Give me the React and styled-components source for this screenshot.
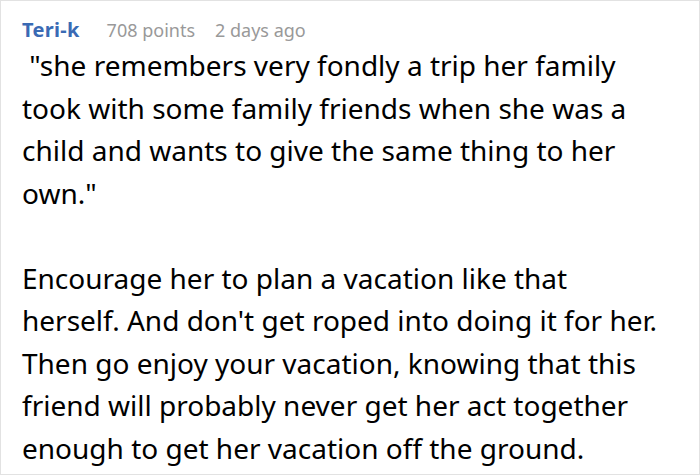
import React from "react";
import styled, { createGlobalStyle } from "styled-components";

const Global = createGlobalStyle`
  html, body { margin: 0; padding: 0; background: #fff; }
  body { font-family: "Noto Sans", "Open Sans", sans-serif; }
`;

const Card = styled.div`
  box-sizing: border-box;
  width: 700px;
  height: 475px;
  border: 1px solid #e2e2e2;
  background: #fff;
  padding: 15px 38px 0 21px;
  overflow: hidden;
`;

const Meta = styled.div`
  display: flex;
  align-items: baseline;
  gap: 20px;
  font-size: 18px;
  line-height: 28px;
`;

const Author = styled.span`
  color: #3a6ab4;
  font-size: 20px;
  font-weight: 700;
  letter-spacing: 0.3px;
  margin-right: 7px;
`;

const Info = styled.span`
  color: #999;
`;

const Body = styled.div`
  color: #000;
  font-size: 28px;
  line-height: 42.5px;
  white-space: pre-wrap;
`;

const Para = styled.p`
  margin: 0 0 42.5px;
`;

export default function App() {
  return (
    <>
      <Global />
      <Card>
        <Meta>
          <Author>Teri-k</Author>
          <Info>708 points</Info>
          <Info>2 days ago</Info>
        </Meta>
        <Body>
          <Para>{' "she remembers very fondly a trip her family took with some family friends when she was a child and wants to give the same thing to her own."'}</Para>
          <Para>Encourage her to plan a vacation like that herself. And don't get roped into doing it for her. Then go enjoy your vacation, knowing that this friend will probably never get her act together enough to get her vacation off the ground.</Para>
        </Body>
      </Card>
    </>
  );
}
